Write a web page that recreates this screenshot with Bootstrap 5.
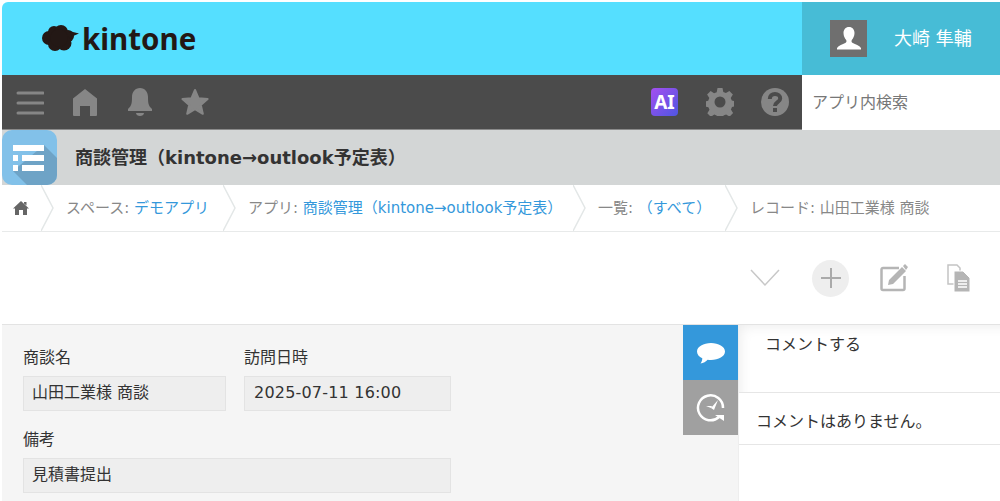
<!DOCTYPE html>
<html lang="ja">
<head>
  <meta charset="UTF-8">
  <title>商談管理</title>
  <link href="https://cdn.jsdelivr.net/npm/bootstrap@5.3.2/dist/css/bootstrap.min.css" rel="stylesheet">
  <style>
    html, body { height: 100%; overflow: hidden; }
    body { background: #fff; padding: 2px 0 0 2px; color: #333; font-family: "DejaVu Sans", "Noto Sans CJK JP", sans-serif; font-size: 16px; }
    .top-head { height: 73px; background: #55dfff; border-top-left-radius: 6px; }
    .logo-box { padding-left: 40px; gap: 2px; }
    .logo-word { font-family: "Noto Sans", sans-serif; font-weight: 700; font-size: 29.5px; color: #231815; line-height: 1; }
    .user-box { width: 198px; background: #47bcd6; padding-left: 28px; }
    .user-pic { width: 37px; height: 37px; background: #6f6f6f; }
    .user-name { color: #fff; font-size: 18px; margin-left: 27px; }
    .tool-bar { height: 55px; background: #4b4b4b; border-bottom: 1px solid #8a8a8a; }
    .tool-left { padding-left: 14px; }
    .tool-right { padding-right: 13px; }
    .ai-mark { width: 27px; height: 28px; margin-right: 1px; margin-left: -1px; border-radius: 4px; background: linear-gradient(135deg, #a44ff0, #4f56e0); color: #fff; font-family: "Noto Sans", sans-serif; font-weight: 700; font-size: 19px; line-height: 28px; text-align: center; }
    .gap-27 { margin-left: 27px; }
    .find-box { width: 198px; height: 55px; background: #fff; color: #777; padding-left: 10px; }
    .app-head { height: 55px; background: #d3d6d6; }
    .app-mark { width: 55px; height: 55px; }
    .app-name { font-weight: 700; font-size: 18px; color: #333; margin-left: 18px; }
    .crumbs { height: 47px; border-bottom: 1px solid #e8eaea; font-size: 15px; color: #888; white-space: nowrap; }
    .crumb-home { width: 39px; padding-left: 11px; }
    .crumb-sep { flex: none; width: 14px; height: 46px; }
    .crumb-item { padding-left: 11px; }
    .crumb-item a { color: #3498db; text-decoration: none; }
    .act-bar { height: 93px; border-bottom: 1px solid #e3e3e3; padding-right: 29px; }
    .act-add { width: 37px; height: 37px; background: #eee; }
    .main-row { height: 176px; }
    .form-side { width: 681px; background: #f5f5f5; padding: 23px 0 0 21px; }
    .field-lbl { line-height: 20px; margin-bottom: 8px; }
    .field-val { height: 35px; background: #eee; border: 1px solid #e3e3e3; padding: 0 0 2px 8px; }
    .field-date { letter-spacing: .2px; padding-left: 9px; }
    .field-gap { margin-top: 19px; }
    .tab-side { width: 55px; background: #f5f5f5; }
    .tab-btn { width: 55px; height: 55px; }
    .tab-blue { background: #3498db; }
    .tab-grey { background: #a0a0a0; }
    .talk-side { flex: 1; border-left: 1px solid #eee; }
    .talk-input { height: 68px; border-bottom: 1px solid #e6e6e6; padding: 8px 0 0 26px; background: #fff; box-shadow: inset 14px 14px 14px -14px #e9e9e9; }
    .talk-none { height: 52px; border-bottom: 1px solid #e6e6e6; padding: 6px 0 0 17px; }
  </style>
</head>
<body>

  <div class="top-head d-flex justify-content-between">
    <div class="logo-box d-flex align-items-center">
      <svg width="38" height="27" viewBox="0 0 38 27" fill="#231815">
        <circle cx="7" cy="13" r="7"/><circle cx="12" cy="7" r="6"/><circle cx="19" cy="7" r="7"/><circle cx="26" cy="11" r="6"/>
        <circle cx="13" cy="19" r="7"/><circle cx="22" cy="18" r="7.500"/><circle cx="17" cy="13" r="9"/>
        <path d="M27 6l10 2.500-7 3z"/>
      </svg>
      <span class="logo-word">kintone</span>
    </div>
    <div class="user-box d-flex align-items-center">
      <div class="user-pic d-flex align-items-center justify-content-center">
        <svg width="28" height="28" viewBox="0 0 28 28"><path fill="#fff" d="M14 2c3.500 0 5.500 2.700 5.500 6 0 3-1.400 5.500-2.700 7-.6 1.200-.3 2.300 1 3 2.500 1.200 6.500 2.200 8.200 5v1.500H2V23c1.700-2.800 5.700-3.800 8.200-5 1.300-.7 1.600-1.800 1-3-1.300-1.500-2.700-4-2.700-7 0-3.300 2-6 5.500-6z"/></svg>
      </div>
      <span class="user-name">大崎 隼輔</span>
    </div>
  </div>

  <div class="tool-bar d-flex justify-content-between">
    <div class="tool-left d-flex align-items-center">
      <svg width="28" height="28" viewBox="0 0 28 28" stroke="#868686" stroke-width="3" stroke-linecap="round"><path d="M2 5h25M2 15h25M2 25h25"/></svg>
      <svg class="gap-27" width="28" height="28" viewBox="0 0 28 28"><path fill="#868686" d="M14 1 26 10.500V27a1 1 0 0 1-1 1h-6V18h-10v10H3a1 1 0 0 1-1-1V10.500z"/></svg>
      <svg class="gap-27" width="28" height="30" viewBox="0 0 28 30"><path fill="#868686" d="M14 1c5 0 8 4 8 9 0 6 .5 9 4 12v2H2v-2c3.500-3 4-6 4-12 0-5 3-9 8-9zM10 26h8c0 2-2 3-4 3s-4-1-4-3z"/></svg>
      <svg class="gap-27" width="28" height="28" viewBox="0 0 28 28"><path fill="#868686" stroke="#868686" stroke-width="2" stroke-linejoin="round" d="M14 2l3.600 8.300 9 .8-6.800 5.900 2 8.800-7.800-4.600-7.800 4.600 2-8.800-6.800-5.900 9-.8z"/></svg>
    </div>
    <div class="d-flex">
      <div class="tool-right d-flex align-items-center">
        <div class="ai-mark">AI</div>
        <svg class="gap-27" width="28" height="28" viewBox="0 0 28 28">
          <path fill="#868686" d="M11.500 0h5l.8 4 2.600 1.100 3.500-2.200 3.500 3.500-2.200 3.500 1.100 2.600 4.200.8v5l-4 .6-1.100 2.700 2.200 3.500-3.500 3.500-3.500-2.200-2.600 1.100-.8 4.200h-5l-.8-4-2.600-1.100-3.500 2.200-3.500-3.500 2.200-3.500-1.100-2.600-4.200-.8v-5l4-.6 1.100-2.700-2.200-3.500 3.500-3.500 3.500 2.200 2.600-1.100z"/>
          <circle cx="14" cy="14" r="5.500" fill="#4b4b4b"/>
        </svg>
        <svg class="gap-27" width="28" height="28" viewBox="0 0 28 28">
          <circle cx="14" cy="14" r="14" fill="#868686"/>
          <path fill="none" stroke="#4b4b4b" stroke-width="4" d="M8.800 11c0-3.200 2.200-5 5.200-5s5.200 1.700 5.200 4.400c0 3.900-5.200 3.700-5.200 7.600"/>
          <rect x="12" y="20" width="4" height="4" fill="#4b4b4b"/>
        </svg>
      </div>
      <div class="find-box d-flex align-items-center">アプリ内検索</div>
    </div>
  </div>

  <div class="app-head d-flex align-items-center">
    <svg class="app-mark" viewBox="0 0 55 55">
      <rect width="55" height="55" rx="10" fill="#82c1e9"/>
      <path fill="#6ea3c6" d="M42 15 55 28V45A10 10 0 0 1 45 55H25L11 41z"/>
      <path fill="#fff" d="M11 15h31v6H11zM11 25h5v6h-5zM20 25h22v6H20zM11 35h5v6h-5zM20 35h22v6H20z"/>
    </svg>
    <span class="app-name">商談管理（kintone→outlook予定表）</span>
  </div>

  <div class="crumbs d-flex align-items-center">
    <div class="crumb-home">
      <svg class="d-block" width="16" height="16" viewBox="0 0 16 16"><path fill="#666" d="M8 1 16 8.500h-2V15h-4v-5H6v5H2V8.500H0zM11 2h2.500v3.500L11 3.500z"/></svg>
    </div>
    <svg class="crumb-sep" viewBox="0 0 14 46"><path fill="none" stroke="#e3e7e7" stroke-width="1.500" d="M0 0l12 23L0 46"/></svg>
    <div class="crumb-item" style="width:168px">スペース: <a href="#">デモアプリ</a></div>
    <svg class="crumb-sep" viewBox="0 0 14 46"><path fill="none" stroke="#e3e7e7" stroke-width="1.500" d="M0 0l12 23L0 46"/></svg>
    <div class="crumb-item" style="width:336px">アプリ: <a href="#">商談管理（kintone→outlook予定表）</a></div>
    <svg class="crumb-sep" viewBox="0 0 14 46"><path fill="none" stroke="#e3e7e7" stroke-width="1.500" d="M0 0l12 23L0 46"/></svg>
    <div class="crumb-item" style="width:138px">一覧: <a href="#">（すべて）</a></div>
    <svg class="crumb-sep" viewBox="0 0 14 46"><path fill="none" stroke="#e3e7e7" stroke-width="1.500" d="M0 0l12 23L0 46"/></svg>
    <div class="crumb-item">レコード: 山田工業様 商談</div>
  </div>

  <div class="act-bar d-flex align-items-center justify-content-end">
    <svg width="30" height="18" viewBox="0 0 30 18"><path fill="none" stroke="#c8c8c8" stroke-width="1.500" d="M1 1l14 15L29 1"/></svg>
    <div class="act-add rounded-circle d-flex align-items-center justify-content-center" style="margin-left:32px">
      <svg width="20" height="20" viewBox="0 0 20 20"><path stroke="#aaa" stroke-width="2" d="M10 0v20M0 10h20"/></svg>
    </div>
    <svg width="28" height="28" viewBox="0 0 28 28" style="margin-left:31px">
      <path fill="none" stroke="#b5b5b5" stroke-width="2.500" stroke-linejoin="round" d="M19 4H3a1.500 1.500 0 0 0-1.500 1.500v19A1.500 1.500 0 0 0 3 26h20a1.500 1.500 0 0 0 1.500-1.500V12"/>
      <path fill="#b5b5b5" d="M9 16 22 3l4 4L13 20l-5 1zM23 2l2-2 3 3-2 3z"/>
    </svg>
    <svg width="24" height="28" viewBox="0 0 24 28" style="margin-left:39px">
      <path fill="none" stroke="#c4c4c4" stroke-width="1.500" d="M1 1h9l3 3v16H1z"/>
      <path fill="#b5b5b5" stroke="#fff" stroke-width="1" d="M7 7h9l7 7v14H7z"/>
      <path stroke="#fff" stroke-width="1.300" d="M11 17h9M11 20h9M11 23h9"/>
    </svg>
  </div>

  <div class="main-row d-flex">
    <div class="form-side">
      <div class="d-flex" style="gap:18px">
        <div style="width:203px">
          <div class="field-lbl">商談名</div>
          <div class="field-val d-flex align-items-center">山田工業様 商談</div>
        </div>
        <div style="width:207px">
          <div class="field-lbl">訪問日時</div>
          <div class="field-val field-date d-flex align-items-center">2025-07-11 16:00</div>
        </div>
      </div>
      <div class="field-gap" style="width:428px">
        <div class="field-lbl">備考</div>
        <div class="field-val d-flex align-items-center">見積書提出</div>
      </div>
    </div>
    <div class="tab-side">
      <div class="tab-btn tab-blue d-flex align-items-center justify-content-center">
        <svg width="28" height="22" viewBox="0 0 28 22"><path fill="#fff" d="M14 1c7.500 0 14 3.600 14 8.500S21.500 18 14 18c-1.200 0-2.300-.1-3.400-.3C9 19.500 6.500 21 3.500 21.500c1-1.300 1.700-2.800 1.800-5.200C2 14.800 0 12.300 0 9.500 0 4.600 6.500 1 14 1z"/></svg>
      </div>
      <div class="tab-btn tab-grey d-flex align-items-center justify-content-center">
        <svg width="30" height="30" viewBox="0 0 30 30"><path fill="none" stroke="#fff" stroke-width="2.500" d="M23 24A12.500 12.500 0 1 1 27 15"/><path fill="#fff" d="M15 15 22 7l-4 10zM15 15l-5-2 6 0z"/><path fill="#fff" d="M19 22h9v6z"/></svg>
      </div>
    </div>
    <div class="talk-side">
      <div class="talk-input">コメントする</div>
      <div class="talk-none d-flex align-items-center">コメントはありません。</div>
    </div>
  </div>

</body>
</html>
